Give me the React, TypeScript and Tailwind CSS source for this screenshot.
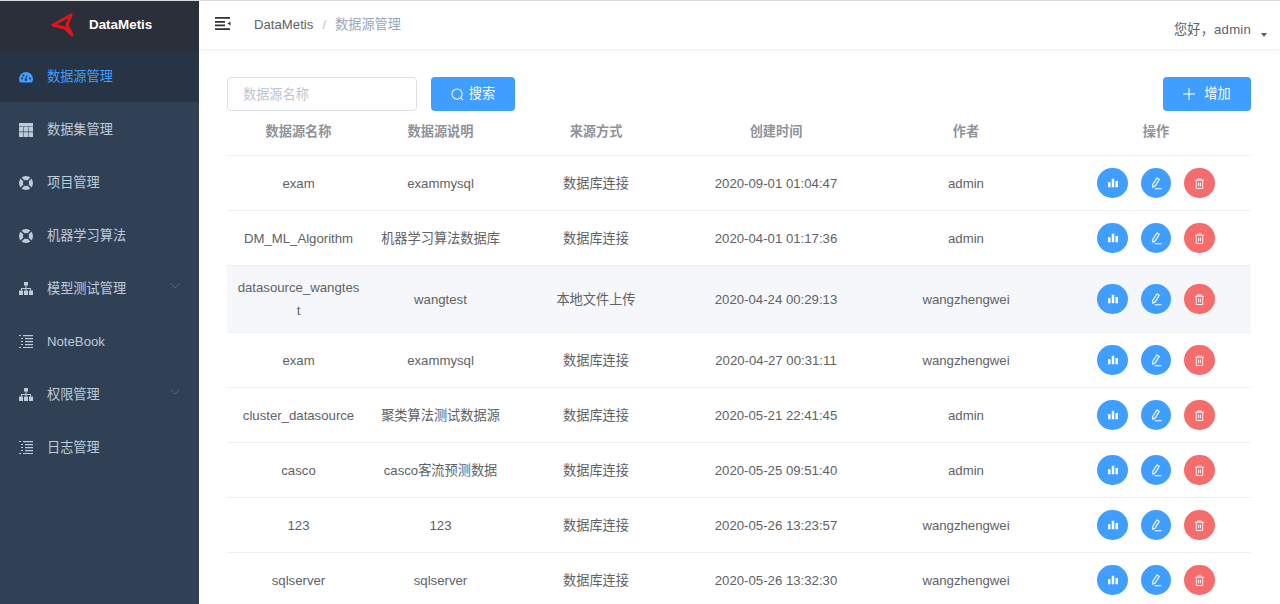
const font = "font-['Liberation_Sans','Noto_Sans_CJK_SC',sans-serif]";

const Gauge = () => (
  <svg viewBox="0 0 14 12" className="w-[14px] h-[12px]" fill="currentColor">
    <path d="M7 1a7 7 0 0 0-7 7c0 1.300.300 2.500 1 3.500h12c.7-1 1-2.200 1-3.500a7 7 0 0 0-7-7zM3 8.500a1 1 0 1 1 0-2 1 1 0 0 1 0 2zm1.500-3a1 1 0 1 1 0-2 1 1 0 0 1 0 2zM7 10a1.300 1.300 0 0 1-.6-2.500L7.800 4l.7.300-1 3.500A1.300 1.300 0 0 1 7 10zm4-1.500a1 1 0 1 1 0-2 1 1 0 0 1 0 2z" fillRule="evenodd" />
  </svg>
);

const TableIcon = () => (
  <svg viewBox="0 0 14 14" className="w-[14px] h-[14px]" fill="currentColor">
    <path d="M0 0h14v3.500H0zM0 4h4.300v4.600H0zM4.850 4h4.300v4.600h-4.300zM9.700 4H14v4.600H9.700zM0 9.200h4.300V14H0zM4.850 9.200h4.300V14h-4.300zM9.700 9.200H14V14H9.700z" />
  </svg>
);

const Ring = () => (
  <svg viewBox="0 0 14 14" className="w-[14px] h-[14px]" fill="none">
    <circle cx="7" cy="7" r="5" stroke="currentColor" strokeWidth="4" />
    <path d="M1.500 1.500l3.500 3.500M12.500 1.500 9 5M1.500 12.500 5 9M12.500 12.500 9 9" stroke="#304156" strokeWidth="1.600" />
  </svg>
);

const Tree = () => (
  <svg viewBox="0 0 14 13" className="w-[14px] h-[13px]" fill="currentColor">
    <path d="M5 0h4v3.500H5zM6.500 3.500h1V6h4.500v2.500h-1V7H7.500v1.500h-1V7H3v1.500H2V6h4.500z" />
    <path d="M0 8.500h4V13H0zM5 8.500h4V13H5zM10 8.500h4V13h-4z" />
  </svg>
);

const ListIcon = () => (
  <svg viewBox="0 0 14 13" className="w-[14px] h-[13px]" fill="currentColor">
    <path d="M0 0h2v1H0zM4 0h10v1.200H4zM2 3h2v1H2zM6 3h8v1.200H6zM2 6h2v1H2zM6 6h8v1.200H6zM2 9h2v1H2zM6 9h8v1.200H6zM0 12h2v1H0zM4 12h10v1.200H4z" />
  </svg>
);

const Chevron = () => (
  <svg viewBox="0 0 10 6" className="w-[10px] h-[6px] -mt-[6px] text-[#54657a]" fill="none" stroke="currentColor" strokeWidth="1">
    <path d="M.5.5 5 5 9.500.500" />
  </svg>
);

const menu = [
  { label: "数据源管理", icon: <Gauge />, active: true },
  { label: "数据集管理", icon: <TableIcon /> },
  { label: "项目管理", icon: <Ring /> },
  { label: "机器学习算法", icon: <Ring /> },
  { label: "模型测试管理", icon: <Tree />, arrow: true },
  { label: "NoteBook", icon: <ListIcon /> },
  { label: "权限管理", icon: <Tree />, arrow: true },
  { label: "日志管理", icon: <ListIcon /> },
];

const rows = [
  ["exam", "exammysql", "数据库连接", "2020-09-01 01:04:47", "admin"],
  ["DM_ML_Algorithm", "机器学习算法数据库", "数据库连接", "2020-04-01 01:17:36", "admin"],
  ["datasource_wangtest", "wangtest", "本地文件上传", "2020-04-24 00:29:13", "wangzhengwei"],
  ["exam", "exammysql", "数据库连接", "2020-04-27 00:31:11", "wangzhengwei"],
  ["cluster_datasource", "聚类算法测试数据源", "数据库连接", "2020-05-21 22:41:45", "admin"],
  ["casco", "casco客流预测数据", "数据库连接", "2020-05-25 09:51:40", "admin"],
  ["123", "123", "数据库连接", "2020-05-26 13:23:57", "wangzhengwei"],
  ["sqlserver", "sqlserver", "数据库连接", "2020-05-26 13:32:30", "wangzhengwei"],
];

const cols = "grid grid-cols-[143px_141px_170px_190px_190px_190px] items-center text-center";

const Actions = () => (
  <div className="flex items-center justify-center gap-[13px]">
    <button className="w-[30.500px] h-[30.500px] rounded-full bg-[#409eff] flex items-center justify-center text-white">
      <svg viewBox="0 0 12 12" className="w-[10px] h-[10px]" fill="currentColor">
        <path d="M0 5h3v6H0zM4.500 1h3v10h-3zM9 3.500h3V11H9z" />
      </svg>
    </button>
    <button className="w-[30.500px] h-[30.500px] rounded-full bg-[#409eff] flex items-center justify-center text-white">
      <svg viewBox="0 0 12 14" className="w-[11px] h-[13px]" fill="none" stroke="currentColor" strokeWidth="1.200">
        <path d="M6.500 1 9 2.500 4.500 9.800 2 11l-.2-2.800zM4 12.800h7.500" />
      </svg>
    </button>
    <button className="w-[30.500px] h-[30.500px] rounded-full bg-[#f56c6c] flex items-center justify-center text-white">
      <svg viewBox="0 0 12 12" className="w-[11px] h-[11px]" fill="none" stroke="currentColor" strokeWidth="1">
        <path d="M1 2.500h10M4 2.500v-1.500h4v1.500M2.500 2.500v9h7v-9M5 5v4M7 5v4" />
      </svg>
    </button>
  </div>
);

export default function App() {
  return (
    <div className={`flex h-[604px] overflow-hidden border-t border-[#dcdcdc] bg-white ${font}`}>
      <aside className="w-[199px] shrink-0 bg-[#304156] text-[13.200px] text-[#bfcbd9]">
        <div className="h-[48px] bg-[#2b2f3a] flex items-center pl-[51px]">
          <svg viewBox="0 0 24 24" className="w-[24px] h-[24px] text-[#e3131d]" fill="none" stroke="currentColor" strokeWidth="3" strokeLinejoin="round" strokeLinecap="round">
            <path d="M20 2 2 12 14 15 21 22 16 12z" />
          </svg>
          <span className="ml-[14px] text-white font-bold text-[13.400px]">DataMetis</span>
        </div>
        {menu.map((m) => (
          <div key={m.label} className={`h-[53px] flex items-center pt-[2px] pl-[19px] pr-[19px] ${m.active ? "bg-[#263445] text-[#409eff]" : ""}`}>
            <span className="w-[14px] flex justify-center">{m.icon}</span>
            <span className="ml-[14px] flex-1">{m.label}</span>
            {m.arrow && <Chevron />}
          </div>
        ))}
      </aside>
      <div className="flex-1 min-w-0 flex flex-col">
        <header className="h-[48px] shrink-0 flex items-center pl-[16px] pr-[13px] shadow-[0_1px_4px_rgba(0,21,41,0.08)] text-[13.200px]">
          <svg viewBox="0 0 16 13" className="w-[16px] h-[13px] -mt-[4px] text-[#303133]" fill="currentColor">
            <path d="M0 0h15v1.700H0zM0 4h10v1.700H0zM0 7.500h10v1.700H0zM0 11.300h15V13H0zM15.500 4.500v4l-3-2z" />
          </svg>
          <span className="ml-[23px] -mt-[1px] text-[#606266]">DataMetis</span>
          <span className="mx-[9px] -mt-[1px] text-[#c0c4cc]">/</span>
          <span className="-mt-[1px] text-[#97a8be]">数据源管理</span>
          <span className="ml-auto mt-[9px] text-[#606266] tracking-[0.200px]">您好，admin</span>
          <span className="ml-[10px] mt-[19px] w-0 h-0 border-x-[3.500px] border-x-transparent border-t-[4px] border-t-[#5a5e66]" />
        </header>
        <main className="flex-1 min-h-0 pt-[28px] pl-[28px] pr-[29px]">
          <div className="flex items-center h-[34px]">
            <input
              placeholder="数据源名称"
              className="w-[190px] h-[34px] rounded border border-[#dcdfe6] px-[15px] text-[13.200px] outline-none placeholder:text-[#c0c4cc]"
            />
            <button className="ml-[14px] w-[84px] h-[34px] rounded bg-[#409eff] text-white text-[13.200px] flex items-center justify-center gap-[5px]">
              <svg viewBox="0 0 14 14" className="w-[13px] h-[13px]" fill="none" stroke="currentColor" strokeWidth="1.100">
                <circle cx="6.500" cy="6.500" r="5.500" />
                <path d="m10.500 10.500 2.500 2.500" />
              </svg>
              搜索
            </button>
            <button className="ml-auto w-[88px] h-[34px] rounded bg-[#409eff] text-white text-[13.200px] flex items-center justify-center gap-[9px]">
              <svg viewBox="0 0 12 12" className="w-[12px] h-[12px]" fill="none" stroke="currentColor" strokeWidth="1.100">
                <path d="M6 0v12M0 6h12" />
              </svg>
              增加
            </button>
          </div>
          <div className={`${cols} h-[45px] border-b border-[#ebeef5] text-[13.200px] font-bold text-[#909399]`}>
            {["数据源名称", "数据源说明", "来源方式", "创建时间", "作者", "操作"].map((h) => (
              <div key={h} className="-mt-[1px] pb-[1px]">{h}</div>
            ))}
          </div>
          {rows.map((r, i) => (
            <div key={i} className={`${cols} border-b border-[#ebeef5] text-[13.200px] text-[#606266] ${i === 2 ? "h-[67px] bg-[#f5f7fa]" : "h-[55px]"}`}>
              {r.map((c, j) => (
                <div key={j} className={`px-[10px] leading-[23px] ${i === 2 && j === 0 ? "break-all" : ""}`}>{c}</div>
              ))}
              <Actions />
            </div>
          ))}
        </main>
      </div>
    </div>
  );
}
